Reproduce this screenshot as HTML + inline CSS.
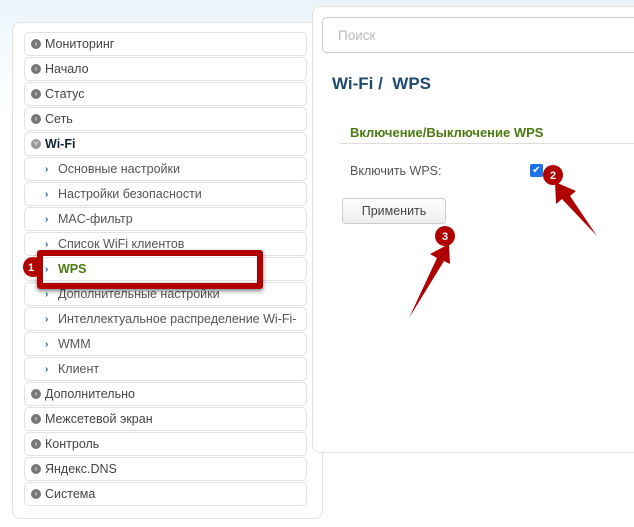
<!DOCTYPE html><html><head><meta charset="utf-8"><style>
body{margin:0;width:634px;height:527px;overflow:hidden;background:linear-gradient(#eaf4fb 0,#f4f9fd 40px,#fff 120px);font-family:"Liberation Sans",Arial,sans-serif;position:relative}
.lp{position:absolute;left:12px;top:22px;width:309px;height:495px;background:#fff;border:1px solid #e2e2e2;border-radius:8px}
.row{position:absolute;left:24px;width:281px;height:22px;border:1px solid #e2e2e2;border-radius:5px;background:#fff;font-size:12.5px;color:#444;line-height:23px}
.row .t{position:absolute;left:20px}
.row.s .t{left:33px;color:#555}
.ic{position:absolute;left:6px;top:6px;width:10px;height:10px;border-radius:50%;background:#777;color:#fff;font-size:8px;line-height:10px;text-align:center}
.ch{position:absolute;left:20px;top:0;color:#1a5e9a;font-size:10px;font-weight:bold}
.rp{position:absolute;left:312px;top:6px;width:340px;height:445px;background:#fff;border:1px solid #e2e2e2;border-radius:8px}
</style></head><body>
<div class="lp"></div>
<div class="row" style="top:32px"><span class="ic">›</span><span class="t">Мониторинг</span></div>
<div class="row" style="top:57px"><span class="ic">›</span><span class="t">Начало</span></div>
<div class="row" style="top:82px"><span class="ic">›</span><span class="t">Статус</span></div>
<div class="row" style="top:107px"><span class="ic">›</span><span class="t">Сеть</span></div>
<div class="row" style="top:132px"><span class="ic" style="background:#999">˅</span><span class="t" style="font-weight:bold;color:#123">Wi-Fi</span></div>
<div class="row s" style="top:157px"><span class="ch">›</span><span class="t">Основные настройки</span></div>
<div class="row s" style="top:182px"><span class="ch">›</span><span class="t">Настройки безопасности</span></div>
<div class="row s" style="top:207px"><span class="ch">›</span><span class="t">MAC-фильтр</span></div>
<div class="row s" style="top:232px"><span class="ch">›</span><span class="t">Список WiFi клиентов</span></div>
<div class="row s" style="top:257px"><span class="ch">›</span><span class="t" style="color:#4a7a10;font-weight:bold">WPS</span></div>
<div class="row s" style="top:282px"><span class="ch">›</span><span class="t">Дополнительные настройки</span></div>
<div class="row s" style="top:307px"><span class="ch">›</span><span class="t">Интеллектуальное распределение Wi-Fi-</span></div>
<div class="row s" style="top:332px"><span class="ch">›</span><span class="t">WMM</span></div>
<div class="row s" style="top:357px"><span class="ch">›</span><span class="t">Клиент</span></div>
<div class="row" style="top:382px"><span class="ic">›</span><span class="t">Дополнительно</span></div>
<div class="row" style="top:407px"><span class="ic">›</span><span class="t">Межсетевой экран</span></div>
<div class="row" style="top:432px"><span class="ic">›</span><span class="t">Контроль</span></div>
<div class="row" style="top:457px"><span class="ic">›</span><span class="t">Яндекс.DNS</span></div>
<div class="row" style="top:482px"><span class="ic">›</span><span class="t">Система</span></div>
<div class="rp"></div>
<div style="position:absolute;left:322px;top:17px;width:330px;height:36px;border:1px solid #ccc;border-radius:5px;background:#fff;box-sizing:border-box;font-size:13.5px;color:#bbb;line-height:35px;padding-left:15px">Поиск</div>
<div style="position:absolute;left:332px;top:74px;font-size:17px;font-weight:bold;color:#1d4b6e">Wi-Fi /&nbsp; WPS</div>
<div style="position:absolute;left:350px;top:125px;font-size:13px;font-weight:bold;color:#4a7a10">Включение/Выключение WPS</div>
<div style="position:absolute;left:340px;top:143px;width:300px;border-top:1px solid #ddd"></div>
<div style="position:absolute;left:350px;top:164px;font-size:12.5px;color:#555">Включить WPS:</div>
<div style="position:absolute;left:530px;top:164px;width:13px;height:13px;background:#1a73e8;border-radius:2px;color:#fff;font-size:10px;line-height:13px;text-align:center">✔</div>
<div style="position:absolute;left:342px;top:198px;width:104px;height:26px;border:1px solid #ccc;border-radius:4px;background:linear-gradient(#fff,#eee);box-sizing:border-box;font-size:12.5px;color:#444;text-align:center;line-height:25px">Применить</div>
<div style="position:absolute;left:37px;top:250px;width:226px;height:39px;border:6px solid #b00000;border-radius:3px;box-sizing:border-box;box-shadow:0 2px 4px rgba(0,0,0,.5)"></div>
<svg style="position:absolute;left:0;top:0" width="634" height="527">
<g fill="#b00000">
<polygon points="597,236 570,196 576,191 555,182 556,204 562,199"/>
<polygon points="409,318 437,258 430,254 449,244 450,264 444,261"/>
<circle cx="553" cy="175" r="10"/><circle cx="445" cy="236" r="10"/><circle cx="33" cy="267" r="10"/>
</g>
<g fill="#fff" font-family="Liberation Sans" font-weight="bold" font-size="11" text-anchor="middle">
<text x="553" y="179">2</text><text x="445" y="240">3</text><text x="31" y="271">1</text></g>
</svg>
</body></html>
